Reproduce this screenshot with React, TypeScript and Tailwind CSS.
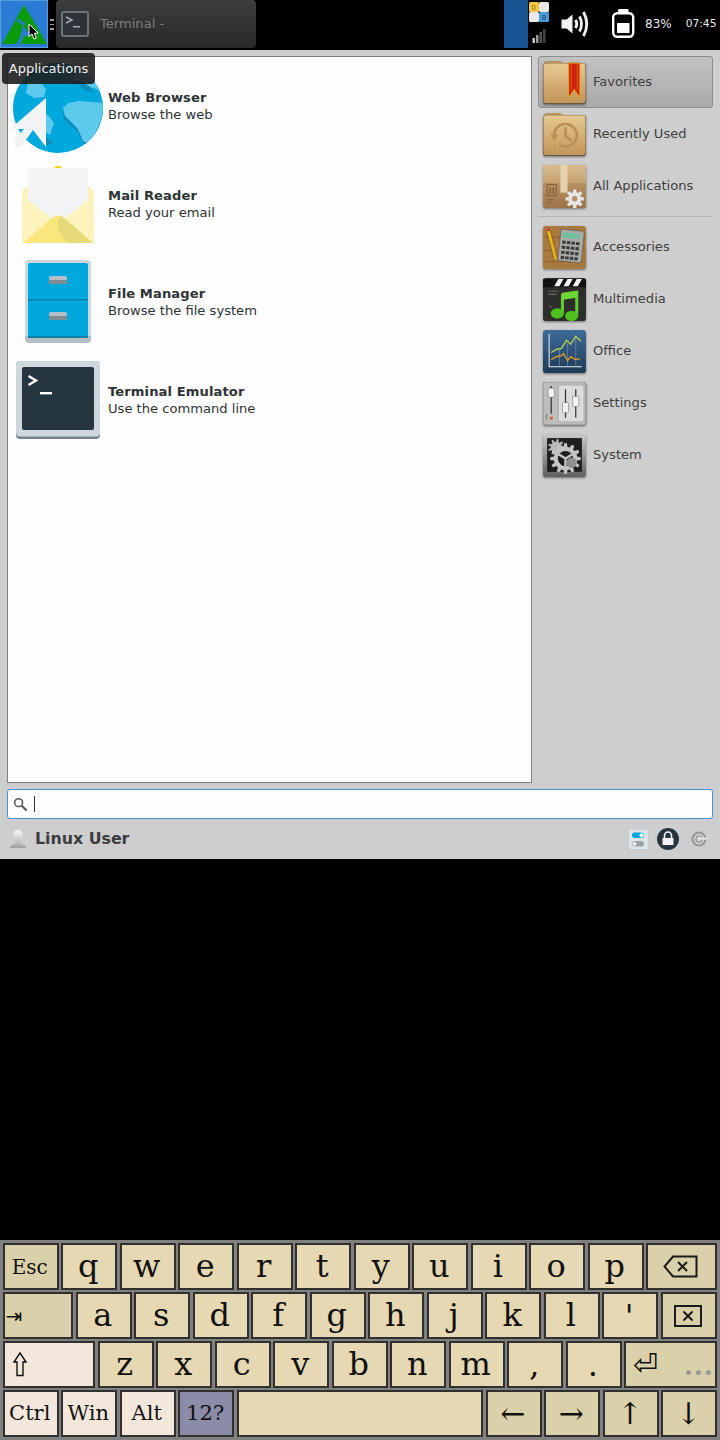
import React from "react";

const keyBase = "flex items-center justify-center shrink-0 border-2 border-[#30302e] pr-[1.5px] text-[#111] font-['DejaVu_Serif',serif] leading-none";
const plain = "bg-[#e6d8b3]";
const mod = "bg-[#dad0a9]";
const light = "bg-[#f3e7dc]";

function Key({ w, tone = plain, size = "text-[32px]", children }: { w: string; tone?: string; size?: string; children?: React.ReactNode }) {
  return <div className={`${keyBase} ${w} ${tone} ${size}`}>{children}</div>;
}

function Letters({ items }: { items: string[] }) {
  return (
    <>
      {items.map((k) => (
        <Key key={k} w="w-[56px]">
          <span className={k === "," || k === "." || k === "'" ? "" : "-mt-[2px]"}>{k}</span>
        </Key>
      ))}
    </>
  );
}

function AppsLogo() {
  return (
    <svg width="46" height="46" viewBox="0 0 46 46">
      <path fill="#0a9a0a" d="M23 4 L46 43 L1 43 Z" />
      <path fill="#2a7bd3" d="M15.5 19.5 L17 17.5 L24.5 22.5 L23 25 Z M22 24 L30 35 L19.5 35 Z M15.5 43 L20 34 L23 35 L19.5 43 Z" />
    </svg>
  );
}

function MouseCursor() {
  return (
    <svg className="absolute left-[28px] top-[23px]" width="12" height="18" viewBox="0 0 12 18">
      <path d="M1 1 L1 13.5 L4 11 L6 16 L8.3 15 L6.3 10.3 L10.2 10 Z" fill="#000" stroke="#fff" strokeWidth="1" />
    </svg>
  );
}

function TerminalSmall() {
  return (
    <svg width="28" height="26" viewBox="0 0 28 26">
      <rect x="1" y="1" width="26" height="24" rx="2" fill="#2d3439" stroke="#6e7478" strokeWidth="2" />
      <path d="M5 6 L11 9 L5 12" fill="none" stroke="#a8adb0" strokeWidth="1.4" />
      <rect x="12" y="15" width="7" height="1.5" fill="#a8adb0" />
    </svg>
  );
}

function Tray() {
  return (
    <svg width="20" height="44" viewBox="0 0 20 44">
      <rect x="0" y="2" width="10" height="10" rx="1.5" fill="#f6c944" />
      <rect x="10" y="2" width="10" height="10" rx="1.5" fill="#e8e8e8" />
      <rect x="0" y="12" width="10" height="10" rx="1.5" fill="#e8e8e8" />
      <rect x="10" y="12" width="10" height="10" rx="1.5" fill="#4a9bdc" />
      <text x="2.5" y="9.5" fontSize="7" fill="#8a6a10" fontFamily="DejaVu Sans">0</text>
      <text x="12.5" y="20" fontSize="7" fill="#14476f" fontFamily="DejaVu Sans">B</text>
      <rect x="3.5" y="38" width="2.5" height="5" fill="#c9c9c9" />
      <rect x="7" y="35" width="2.5" height="8" fill="#9a9a9a" />
      <rect x="10.5" y="32" width="2.5" height="11" fill="#555" />
      <rect x="14" y="29" width="2.5" height="14" fill="#444" />
    </svg>
  );
}

function Volume() {
  return (
    <svg width="28" height="28" viewBox="0 0 28 28" fill="none">
      <path d="M0.5 9.5 H5.5 L11.5 4.5 V23.5 L5.5 18.5 H0.5 Z" fill="#f2f2f2" />
      <path d="M14.5 10 Q17 14 14.5 18" stroke="#f2f2f2" strokeWidth="3" />
      <path d="M18.5 6.5 Q22.5 14 18.5 21.5" stroke="#f2f2f2" strokeWidth="2.8" />
      <path d="M22.5 2 Q29 14 22.5 26" stroke="#f2f2f2" strokeWidth="2.8" />
    </svg>
  );
}

function Battery() {
  return (
    <svg width="23" height="29" viewBox="0 0 23 29" fill="none">
      <rect x="6" y="0" width="10.5" height="5" rx="1" fill="#fff" />
      <rect x="1.2" y="4.2" width="20" height="23.6" rx="4" stroke="#fff" strokeWidth="2.4" fill="#000" />
      <rect x="5" y="14" width="12.5" height="10" rx="0.5" fill="#fff" />
    </svg>
  );
}

function Globe() {
  return (
    <svg width="96" height="96" viewBox="0 0 96 96">
      <defs>
        <clipPath id="gl"><circle cx="48" cy="51" r="45" /></clipPath>
      </defs>
      <circle cx="48" cy="51" r="45" fill="#01a8dd" />
      <g clipPath="url(#gl)">
        <path fill="#0e8cbb" d="M53 53 L59 49 L70 47 L95 49 L95 60 L86 81 L81 90 L73 87 L68 75 L61 69 L54 62 Z" />
        <path fill="#5dcaed" d="M53 51 L58 46 L70 44 L94 46 L94 57 L85 77 L80 87 L73 84 L68 72 L62 66 L55 59 Z" />
        <path fill="#0e8cbb" d="M61 24 L74 24 L84 35 L76 34 L69 28 Z" />
        <path fill="#5dcaed" d="M61 20 L72 14 L84 20 L90 33 L80 30 L72 24 L62 24 Z" />
        <path fill="#5dcaed" d="M18 24 L30 24 L36 32 L34 40 L24 41 L16 36 Z" />
        <path fill="#5dcaed" d="M25 58 L38 58 L44 66 L40 78 L26 68 Z" />
        <path fill="#0e8cbb" d="M36 80 L44 86 L36 88 Z" />
      </g>
      <path fill="#f1f3f5" d="M36 41 V90 L23 73 L13 87 Q9 93 5 88 Q3 85 6 81 L14 72 L0 72 Z" />
    </svg>
  );
}

function Mail() {
  return (
    <svg width="96" height="96" viewBox="0 0 96 96">
      <circle cx="48" cy="16" r="5" fill="#ffd400" />
      <path fill="#ffd400" d="M12 37 L20 30 V42 Z M84 37 L76 30 V42 Z" />
      <path fill="#fcf3bd" d="M12 37 L48 68 L84 37 V88 H12 Z" />
      <rect x="18" y="13" width="60" height="55" fill="#f2f4f6" />
      <path fill="#fcf3bd" d="M12 37 L18 32 V53 L12 48 Z M84 37 L78 32 V53 L84 48 Z" />
      <path fill="#fcf3bd" d="M12 40 L42 64 L14 88 H12 Z M84 40 L54 64 L82 88 H84 Z" />
      <path fill="#f9e77e" d="M13 88 L42 63 Q48 58 54 63 L83 88 Z" />
      <path fill="#e6da78" d="M51 60.5 L83 88 H59 Q48 80 48 70 Q48 64 51 60.5 Z" />
    </svg>
  );
}

function Files() {
  return (
    <svg width="96" height="96" viewBox="0 0 96 96">
      <rect x="15" y="7" width="66" height="83" rx="4" fill="#ced7dc" />
      <path d="M15 85 Q15 90 19 90 H77 Q81 90 81 85 V83 H15 Z" fill="#b4bfc5" />
      <rect x="18" y="10" width="60" height="75" rx="2" fill="#01a8dd" />
      <rect x="18" y="46" width="60" height="1.5" fill="#0a7ea5" />
      <rect x="18" y="83" width="60" height="2" fill="#0a7ea5" />
      <rect x="39" y="23" width="18" height="8" rx="2" fill="#b4bfc5" />
      <rect x="39" y="27" width="18" height="4" fill="#7f8c92" />
      <rect x="39" y="59" width="18" height="8" rx="2" fill="#b4bfc5" />
      <rect x="39" y="63" width="18" height="4" fill="#7f8c92" />
    </svg>
  );
}

function TerminalBig() {
  return (
    <svg width="96" height="96" viewBox="0 0 96 96">
      <rect x="6" y="10" width="84" height="78" rx="4" fill="#76848b" />
      <rect x="6" y="10" width="84" height="75.5" rx="4" fill="#ced7dc" />
      <rect x="12" y="16" width="72" height="63" rx="2" fill="#263640" />
      <path d="M18.5 25 L26 29.5 L18.5 34" fill="none" stroke="#fff" strokeWidth="2.4" />
      <rect x="30" y="41" width="12" height="2.4" fill="#fff" />
    </svg>
  );
}

const CAT_VB = "1 1 43 43";

function Folder({ children }: { children?: React.ReactNode }) {
  return (
    <svg width="44" height="44" viewBox={CAT_VB}>
      <defs>
        <linearGradient id="fo" x1="0" y1="0" x2="0" y2="1">
          <stop offset="0" stopColor="#e7c892" />
          <stop offset="1" stopColor="#c29559" />
        </linearGradient>
      </defs>
      <path d="M2 5 Q2 1 5 1 H16 Q19 1 20 3 H40 Q43 3 43 6 V12 H2 Z" fill="#b8935c" />
      <rect x="1" y="3.5" width="42" height="39.5" rx="3" fill="#6a5a44" />
      <rect x="1.5" y="3.5" width="41" height="38.5" rx="3" fill="url(#fo)" />
      {children}
    </svg>
  );
}

function FavIcon() {
  return (
    <Folder>
      <path d="M26 3 H37 V37 L31.5 29 L26 37 Z" fill="#cf2410" stroke="#e0a020" strokeWidth="1" />
      <path d="M28.5 3 V29 M34.5 3 V29" stroke="#ee7a1a" strokeWidth="0.6" />
    </Folder>
  );
}

function RecentIcon() {
  return (
    <Folder>
      <g fill="none" stroke="#ba8f58" strokeWidth="2.6">
        <path d="M12 24 A11 11 0 1 1 17 32" />
        <path d="M23 15 V24 L29 28" />
      </g>
      <path d="M8 22 H16 L12 28 Z" fill="#ba8f58" />
    </Folder>
  );
}

function AllIcon() {
  return (
    <svg width="44" height="44" viewBox={CAT_VB}>
      <defs>
        <linearGradient id="bx" x1="0" y1="0" x2="0" y2="1">
          <stop offset="0" stopColor="#d8bb8d" />
          <stop offset="0.42" stopColor="#c6a270" />
          <stop offset="0.43" stopColor="#b89161" />
          <stop offset="1" stopColor="#9c744a" />
        </linearGradient>
      </defs>
      <rect x="1" y="1" width="42" height="42" rx="3" fill="url(#bx)" />
      <rect x="18" y="1" width="7" height="27" fill="#e6d2ad" />
      <rect x="5" y="20" width="9" height="11" fill="none" stroke="#80603a" strokeWidth="1" />
      <path d="M8 23 V29 M11 23 V29" stroke="#80603a" strokeWidth="1.4" />
      <path d="M5 35 H11 M5 38 H9" stroke="#80603a" strokeWidth="1" />
      <g transform="translate(32 34)">
        <circle r="6.5" fill="#e6e6e6" />
        <g stroke="#e6e6e6" strokeWidth="3.2">
          <path d="M0 -9 V9 M-9 0 H9 M-6.5 -6.5 L6.5 6.5 M-6.5 6.5 L6.5 -6.5" />
        </g>
        <circle r="2.6" fill="#b89161" />
      </g>
    </svg>
  );
}

function AccIcon() {
  return (
    <svg width="44" height="44" viewBox={CAT_VB}>
      <rect x="1" y="1" width="42" height="42" rx="3" fill="#a97a3f" />
      <path d="M1 12 H43 M1 25 H43 M1 36 H43" stroke="#8e6430" strokeWidth="1" />
      <path d="M4.5 6 L12.5 36 L15 33 L8 5 Z" fill="#e8b81c" stroke="#6a4a1a" strokeWidth="0.6" />
      <path d="M4.5 6 L8 5 L7 3 L5 3.5 Z" fill="#d33" />
      <rect x="17" y="5" width="23" height="31" rx="2" transform="rotate(6 28 20)" fill="#a9aba8" stroke="#555" strokeWidth="0.6" />
      <rect x="20" y="8" width="17" height="5" transform="rotate(6 28 10)" fill="#6fbf9c" />
      <g fill="#3b3b3b" transform="rotate(6 28 20)">
        {[16, 21, 26, 31].map((y) =>
          [19.5, 24, 28.5, 33].map((x) => <rect key={`${x}-${y}`} x={x} y={y} width="3.4" height="3" />)
        )}
      </g>
    </svg>
  );
}

function MediaIcon() {
  return (
    <svg width="44" height="44" viewBox={CAT_VB}>
      <rect x="1" y="1" width="42" height="42" rx="3" fill="#2e2e2c" />
      <rect x="1" y="2" width="42" height="8" fill="#111" />
      <path d="M12 9 L16 2 H21 L17 9 Z M21 9 L25 2 H30 L26 9 Z M30 9 L34 2 H39 L35 9 Z" fill="#f4f4f4" />
      <path d="M6 14 H16 M6 17 H14 M7 29 H10" stroke="#666" strokeWidth="1" />
      <path d="M20 17 L34 15 V38 M20 17 V35" stroke="#5fce2c" strokeWidth="3" fill="none" />
      <path d="M19 16 L35 13.5 V20 L19 22.5 Z" fill="#6fd638" />
      <ellipse cx="15" cy="35.5" rx="6.5" ry="5" fill="#4fc021" />
      <ellipse cx="29" cy="38" rx="6.5" ry="5" fill="#4fc021" />
    </svg>
  );
}

function OfficeIcon() {
  return (
    <svg width="44" height="44" viewBox={CAT_VB}>
      <defs>
        <linearGradient id="of" x1="0" y1="0" x2="0" y2="1">
          <stop offset="0" stopColor="#3e6b9b" />
          <stop offset="1" stopColor="#1f3a57" />
        </linearGradient>
      </defs>
      <rect x="1" y="1" width="42" height="42" rx="3" fill="url(#of)" />
      <path d="M7 5 V37 H39" stroke="#e8eef2" strokeWidth="1" fill="none" />
      <path d="M17 20 V37 M25 14 V37 M33 8 V37" stroke="#7f9cb3" strokeWidth="0.6" />
      <path d="M9 23 L14 20 L19 19 L24 11 L28 15 L33 7 L38 12" stroke="#b9dd4b" strokeWidth="1.2" fill="none" />
      <path d="M9 30 L14 27 L19 26 L21 24 L25 31 L28 27 L33 30 L37 29" stroke="#eda21b" strokeWidth="1.2" fill="none" />
    </svg>
  );
}

function SettingsIcon() {
  return (
    <svg width="44" height="44" viewBox={CAT_VB}>
      <rect x="1" y="1" width="42" height="42" rx="3" fill="#bdbdbb" stroke="#777" strokeWidth="0.6" />
      <rect x="16" y="4" width="25" height="36" rx="2" fill="#dcdcda" stroke="#9a9a98" strokeWidth="0.6" />
      <path d="M9 5 V32 M23 8 V36 M33 8 V36" stroke="#333" strokeWidth="1.2" />
      <rect x="6" y="7" width="6" height="9" rx="1" fill="#f2f2f2" stroke="#777" strokeWidth="0.6" />
      <rect x="20" y="21" width="6" height="10" rx="1" fill="#f2f2f2" stroke="#777" strokeWidth="0.6" />
      <rect x="30" y="15" width="6" height="10" rx="1" fill="#f2f2f2" stroke="#777" strokeWidth="0.6" />
      <rect x="8" y="35" width="2.5" height="2.5" fill="#d9531e" />
      <path d="M4.5 32 V38" stroke="#777" strokeWidth="1" />
    </svg>
  );
}

function gearPath(cx: number, cy: number, teeth: number, ro: number, ri: number) {
  const pts: string[] = [];
  const step = (Math.PI * 2) / teeth;
  for (let i = 0; i < teeth; i++) {
    const a = i * step;
    [
      [a - step * 0.32, ri],
      [a - step * 0.18, ro],
      [a + step * 0.18, ro],
      [a + step * 0.32, ri],
    ].forEach(([t, r]) => pts.push(`${(cx + Math.cos(t) * r).toFixed(1)} ${(cy + Math.sin(t) * r).toFixed(1)}`));
  }
  return `M${pts.join(" L")} Z`;
}

function SystemIcon() {
  return (
    <svg width="44" height="44" viewBox={CAT_VB}>
      <defs>
        <linearGradient id="sy" x1="0" y1="0" x2="0" y2="1">
          <stop offset="0" stopColor="#c9c9c7" />
          <stop offset="1" stopColor="#5f5f5d" />
        </linearGradient>
      </defs>
      <rect x="1" y="1" width="42" height="42" rx="3" fill="url(#sy)" />
      <rect x="5" y="5" width="34" height="33" fill="#1e1e1e" />
      <path d={gearPath(14, 14, 9, 8, 5.5)} fill="#b8b8b6" />
      <path d={gearPath(23, 25, 12, 15, 11.5)} fill="#c4c4c2" />
      <circle cx="23" cy="25" r="7.5" fill="#1e1e1e" />
      <path d="M23 25 L15 20 M23 25 L31 20 M23 25 V33" stroke="#c4c4c2" strokeWidth="2.4" />
      <circle cx="29" cy="29" r="5" fill="#8f8f8d" />
    </svg>
  );
}

function Search() {
  return (
    <svg width="15" height="15" viewBox="0 0 16 16" fill="none">
      <circle cx="6" cy="6" r="4.2" stroke="#555" strokeWidth="1.6" />
      <path d="M9.3 9.3 L14.5 14.5" stroke="#555" strokeWidth="2.2" />
    </svg>
  );
}

function UserIcon() {
  return (
    <svg width="20" height="20" viewBox="0 0 20 22">
      <defs>
        <linearGradient id="us" x1="0" y1="0" x2="0" y2="1">
          <stop offset="0" stopColor="#fafafa" />
          <stop offset="1" stopColor="#a0a0a0" />
        </linearGradient>
      </defs>
      <path d="M10 1 C14 1 15.5 4 15 8 C14.7 11 13 13 12.5 15 C15 17 19 18 19.5 21 H0.5 C1 18 5 17 7.5 15 C7 13 5.3 11 5 8 C4.5 4 6 1 10 1 Z" fill="url(#us)" />
    </svg>
  );
}

function SwitchIcon() {
  return (
    <svg width="21" height="21" viewBox="0 0 21 21">
      <rect x="0.5" y="0.5" width="20" height="20" rx="2" fill="#dfe5e8" stroke="#c5ced3" />
      <rect x="4" y="3.5" width="12" height="5.5" rx="2.75" fill="#01a8dd" />
      <circle cx="13.5" cy="6.25" r="2" fill="#fff" />
      <rect x="4" y="12" width="12" height="5.5" rx="2.75" fill="#9aa3a8" />
      <circle cx="6.5" cy="14.75" r="2" fill="#e8e8e8" />
    </svg>
  );
}

function LockIcon() {
  return (
    <svg width="22" height="22" viewBox="0 0 22 22">
      <circle cx="11" cy="11" r="11" fill="#263640" />
      <path d="M7.5 10 V7.5 A3.5 3.5 0 0 1 14.5 7.5 V10" fill="none" stroke="#f2f2f2" strokeWidth="1.6" />
      <rect x="5.5" y="10" width="11" height="7" rx="0.5" fill="#f2f2f2" />
    </svg>
  );
}

function PowerIcon() {
  return (
    <svg width="16" height="16" viewBox="0 0 16 16" fill="none">
      <circle cx="8" cy="8" r="6.5" stroke="#989898" strokeWidth="2.2" />
      <circle cx="8" cy="8" r="3" fill="#d8d8d8" stroke="#8a8a8a" strokeWidth="1.2" />
      <path d="M8 7.6 H16" stroke="#e8e8e8" strokeWidth="2" />
    </svg>
  );
}

function BackspaceGlyph() {
  return (
    <svg width="36" height="23" viewBox="0 0 36 23" fill="none">
      <path d="M10 1.5 H33.5 V21.5 H10 L1.5 11.5 Z" stroke="#1a1a1a" strokeWidth="2" />
      <path d="M15 7 L24 16 M24 7 L15 16" stroke="#1a1a1a" strokeWidth="2" />
    </svg>
  );
}

function DeleteGlyph() {
  return (
    <svg width="28" height="22" viewBox="0 0 28 22" fill="none">
      <rect x="1" y="1" width="26" height="20" stroke="#1a1a1a" strokeWidth="2" />
      <path d="M9.5 6.5 L18.5 15.5 M18.5 6.5 L9.5 15.5" stroke="#1a1a1a" strokeWidth="2" />
    </svg>
  );
}

function ShiftGlyph() {
  return (
    <svg width="14" height="25" viewBox="0 0 14 25" fill="none">
      <path d="M7 1 L13 10 H10 V23.5 H4 V10 H1 Z" stroke="#111" strokeWidth="1.4" />
    </svg>
  );
}

function AppRow({ icon, title, sub }: { icon: React.ReactNode; title: string; sub: string }) {
  return (
    <div className="flex h-[98px] items-center gap-[2px] pl-[2px]">
      <div className="-mt-[2px] h-[96px] w-[96px] shrink-0">{icon}</div>
      <div className="text-[13.1px] leading-[17px] text-[#2e3436]">
        <div className="font-bold tracking-[0.1px]">{title}</div>
        <div>{sub}</div>
      </div>
    </div>
  );
}

function Cat({ icon, label, active }: { icon: React.ReactNode; label: string; active?: boolean }) {
  return (
    <div
      className={`flex h-[52px] items-center gap-[6px] pl-[4px] text-[13.1px] text-[#404040] ${
        active ? "rounded-[3px] border border-[#8c8c8c] bg-gradient-to-b from-[#c2c2c2] to-[#a9a9a9]" : "border border-transparent"
      }`}
    >
      <div className="mt-[2px] h-[44px] w-[44px] shrink-0 drop-shadow-[0_1px_1px_rgba(0,0,0,0.45)]">{icon}</div>
      <span>{label}</span>
    </div>
  );
}

export default function App() {
  return (
    <div className="relative flex h-[1440px] w-[720px] flex-col overflow-hidden bg-black font-['DejaVu_Sans',sans-serif]">
      {/* Panel */}
      <div className="flex h-[50px] shrink-0 items-start">
        <div className="flex h-[48px] w-[48px] items-center justify-center border border-[#5b9ee0] bg-[#2a7bd3]">
          <AppsLogo />
        </div>
        <div className="ml-[2px] mt-[19px] flex w-[4px] flex-col gap-[3px]">
          <div className="h-[1.5px] bg-[#a0a0a0]" />
          <div className="h-[1.5px] bg-[#a0a0a0]" />
          <div className="h-[1.5px] bg-[#a0a0a0]" />
        </div>
        <div className="ml-[2px] flex h-[48px] w-[200px] items-center rounded-[4px] bg-gradient-to-b from-[#3d3d3d] to-[#282828] pl-[5px] text-[13.1px] text-[#7d7d7d]">
          <TerminalSmall />
          <span className="ml-[11px]">Terminal -</span>
        </div>
        <div className="ml-[248px] h-[48px] w-[24px] bg-[#1a5591]" />
        <div className="ml-[1px]">
          <Tray />
        </div>
        <div className="ml-[12px] mt-[10px]">
          <Volume />
        </div>
        <div className="ml-[23px] mt-[9px]">
          <Battery />
        </div>
        <span className="ml-[10px] mt-[16px] text-[12px] leading-[16px] text-[#e6e6e6]">83%</span>
        <span className="ml-[14px] mt-[16px] text-[10.7px] leading-[16px] text-[#e6e6e6]">07:45</span>
      </div>

      {/* Whisker menu */}
      <div className="flex h-[809px] shrink-0 flex-col bg-[#cecece] px-[7px] pt-[6px]">
        <div className="flex h-[727px] gap-[6px]">
          <div className="w-[525px] border border-[#7f7f7f] bg-[#fdfdfd]">
            <AppRow icon={<Globe />} title="Web Browser" sub="Browse the web" />
            <AppRow icon={<Mail />} title="Mail Reader" sub="Read your email" />
            <AppRow icon={<Files />} title="File Manager" sub="Browse the file system" />
            <AppRow icon={<TerminalBig />} title="Terminal Emulator" sub="Use the command line" />
          </div>
          <div className="w-[175px]">
            <Cat icon={<FavIcon />} label="Favorites" active />
            <Cat icon={<RecentIcon />} label="Recently Used" />
            <Cat icon={<AllIcon />} label="All Applications" />
            <div className="mb-[4px] mt-[4px] h-px bg-[#b4b4b4]" />
            <Cat icon={<AccIcon />} label="Accessories" />
            <Cat icon={<MediaIcon />} label="Multimedia" />
            <Cat icon={<OfficeIcon />} label="Office" />
            <Cat icon={<SettingsIcon />} label="Settings" />
            <Cat icon={<SystemIcon />} label="System" />
          </div>
        </div>
        <div className="mt-[6px] flex h-[30px] items-center rounded-[3px] border border-[#4a90d9] bg-[#fdfdfd] pl-[5px]">
          <Search />
          <div className="ml-[6px] h-[16px] w-px bg-[#2e3436]" />
        </div>
        <div className="flex h-[40px] items-center pl-[1px]">
          <UserIcon />
          <span className="ml-[7px] text-[15.8px] font-bold text-[#3c3c3c]">Linux User</span>
          <div className="ml-auto flex items-center">
            <SwitchIcon />
            <div className="ml-[8px]"><LockIcon /></div>
            <div className="ml-[12px] mr-[6px]"><PowerIcon /></div>
          </div>
        </div>
      </div>

      <div className="flex-1" />

      {/* On-screen keyboard */}
      <div className="flex h-[200px] shrink-0 flex-col gap-[2px] bg-[#808080] pl-[2.5px] pr-[3px] pt-[3px]">
        <div className="flex h-[47px] gap-[2.5px]">
          <Key w="w-[56px]" tone={mod} size="text-[20px]">Esc</Key>
          <Letters items={["q", "w", "e", "r", "t", "y", "u", "i", "o", "p"]} />
          <Key w="flex-1" tone={mod}><BackspaceGlyph /></Key>
        </div>
        <div className="flex h-[47px] gap-[2.5px]">
          <Key w="w-[70.5px] justify-start pl-[1px]" tone={mod} size="text-[20px]"><span className="font-['DejaVu_Sans',sans-serif]">⇥</span></Key>
          <Letters items={["a", "s", "d", "f", "g", "h", "j", "k", "l", "'"]} />
          <Key w="flex-1" tone={mod}><DeleteGlyph /></Key>
        </div>
        <div className="flex h-[47px] gap-[2.5px]">
          <Key w="w-[92.5px] justify-start pl-[8px]" tone={light}><ShiftGlyph /></Key>
          <Letters items={["z", "x", "c", "v", "b", "n", "m", ",", "."]} />
          <Key w="relative flex-1 justify-start pl-[7px]" tone={mod} size="text-[30px]">
            <span className="font-['DejaVu_Sans',sans-serif]">⏎</span>
            <span className="absolute bottom-[11px] right-[4px] flex gap-[5px]">
              <i className="h-[5px] w-[5px] rounded-full bg-[#9a9a9a]" />
              <i className="h-[5px] w-[5px] rounded-full bg-[#9a9a9a]" />
              <i className="h-[5px] w-[5px] rounded-full bg-[#9a9a9a]" />
            </span>
          </Key>
        </div>
        <div className="flex h-[47px] gap-[2.5px]">
          <Key w="w-[56px]" tone={light} size="text-[21px]">Ctrl</Key>
          <Key w="w-[56px]" tone={light} size="text-[21px]">Win</Key>
          <Key w="w-[56px]" tone={light} size="text-[21px]">Alt</Key>
          <Key w="w-[56px]" tone="bg-[#8b8ca8]" size="text-[21px]">12?</Key>
          <Key w="w-[246.5px]" />
          <Key w="w-[56px]" tone={mod} size="text-[30px]">←</Key>
          <Key w="w-[56px]" tone={mod} size="text-[30px]">→</Key>
          <Key w="w-[56px]" tone={mod} size="text-[30px]">↑</Key>
          <Key w="flex-1" tone={mod} size="text-[30px]">↓</Key>
        </div>
      </div>

      {/* Tooltip over the menu */}
      <div className="absolute left-[2px] top-[53px] flex h-[31px] w-[93px] items-center justify-center rounded-[4px] bg-[#1e1e1e]/90 text-[13px] text-[#f0f0f0]">
        Applications
      </div>
      <MouseCursor />
    </div>
  );
}
